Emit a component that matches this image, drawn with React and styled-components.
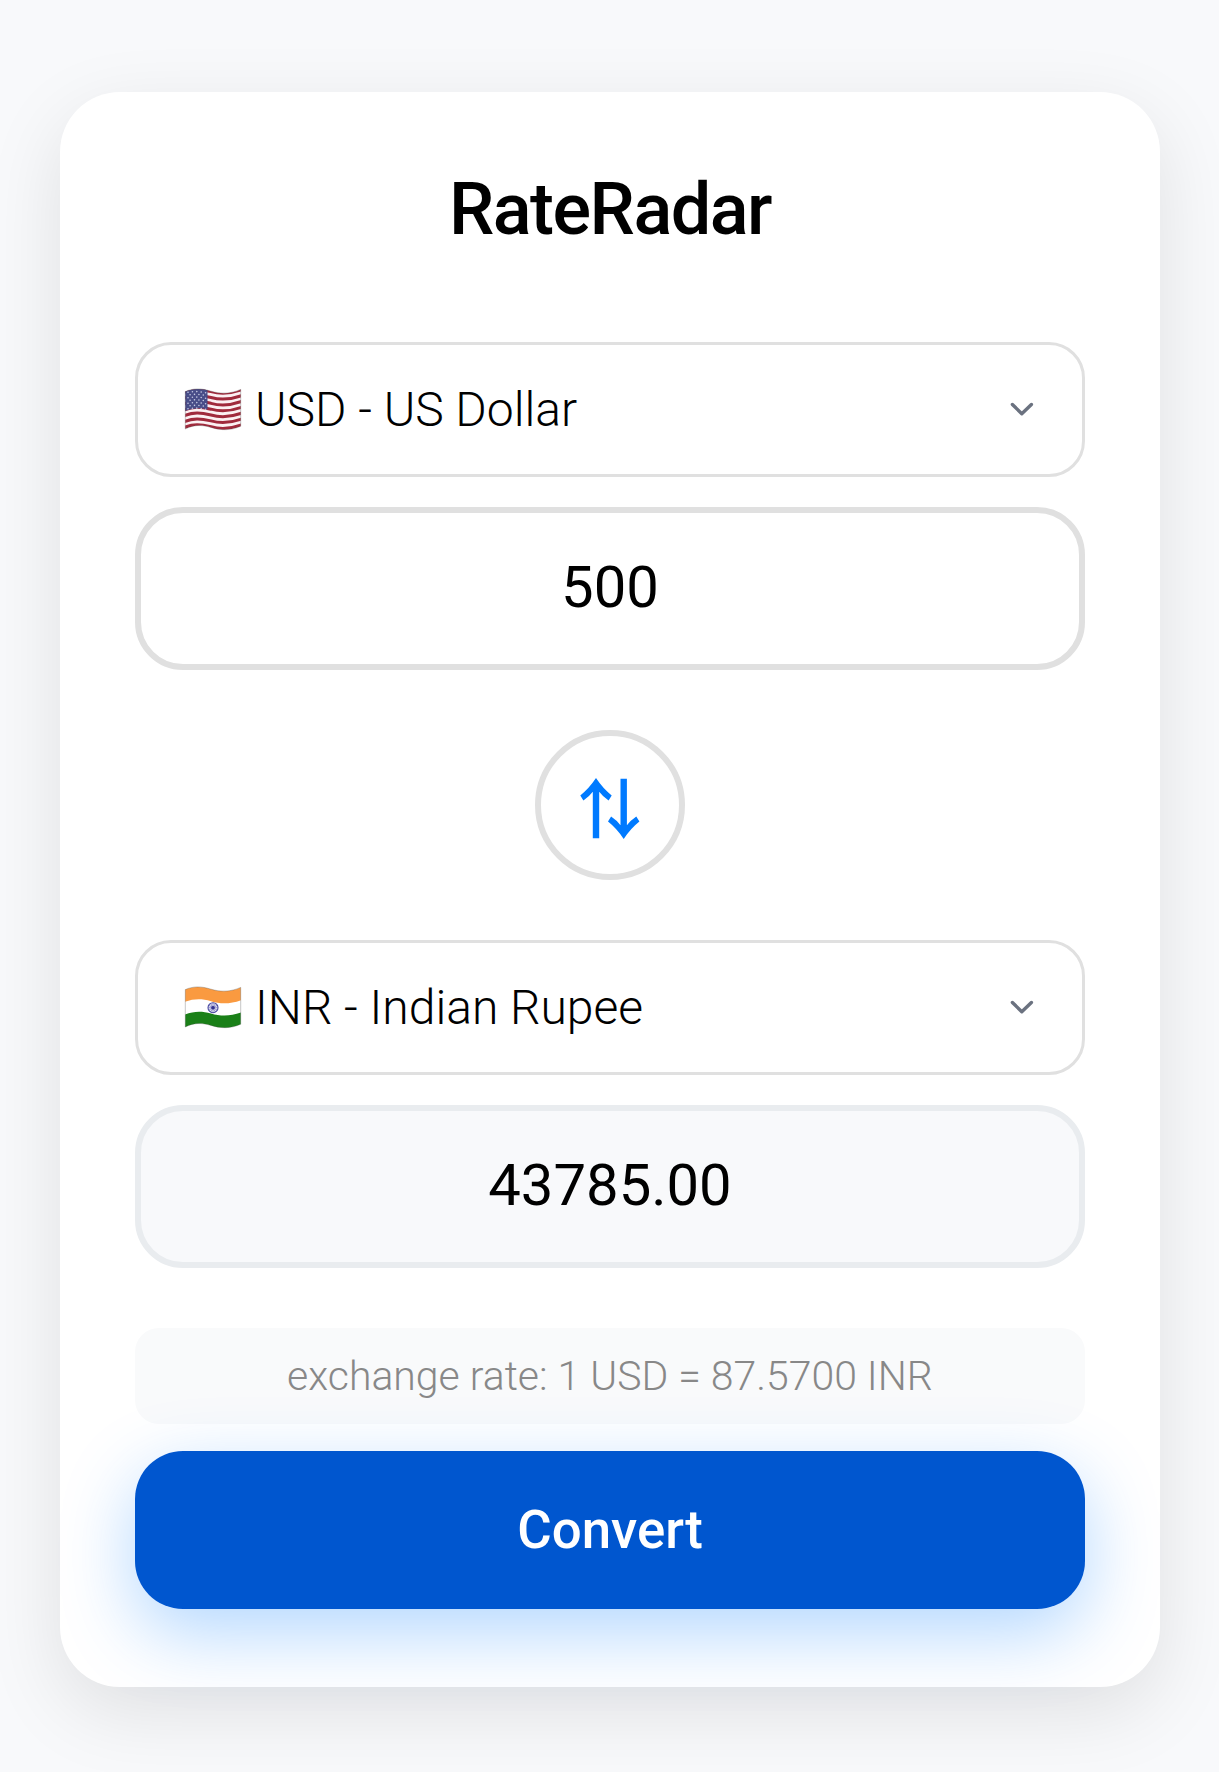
import React, { useState } from "react";
import styled, { createGlobalStyle } from "styled-components";

const GlobalStyle = createGlobalStyle`
  *, *::before, *::after { box-sizing: border-box; }
  body {
    margin: 0;
    background: #f8f9fb;
    font-family: Roboto, "Liberation Sans", sans-serif;
    color: #000;
  }
`;

const Page = styled.main`
  min-height: 1772px;
  padding: 92px 59px 85px 60px;
  overflow: hidden;
`;

const Card = styled.section`
  display: flex;
  flex-direction: column;
  height: 1595px;
  padding: 75px;
  border-radius: 60px;
  background: #fff;
  box-shadow: 0 24px 78px rgba(0, 0, 0, 0.1);
`;

const Title = styled.h1`
  margin: 0 0 90px;
  font-size: 72px;
  line-height: 85px;
  font-weight: 500;
  letter-spacing: -1.5px;
  text-align: center;
`;

const Field = styled.div`
  display: flex;
  flex-direction: column;
  gap: 30px;
`;

const Select = styled.button`
  display: flex;
  align-items: center;
  width: 100%;
  height: 135px;
  padding: 0 48px 0 45px;
  border: 3px solid #e0e0e0;
  border-radius: 36px;
  background: #fff;
  color: #000;
  font: 300 48px/56px Roboto, "Liberation Sans", sans-serif;
  text-align: left;
`;

const SelectLabel = styled.span`
  flex: 1;
  margin-left: 12px;
`;

const FlagIcon = styled.svg`
  width: 60px;
  height: 44px;
  margin-bottom: 1px;
`;

const ChevronIcon = styled.svg`
  width: 24px;
  height: 16px;
  margin-bottom: 2px;
`;

const Amount = styled.input`
  display: block;
  width: 100%;
  height: 163px;
  padding: 0 0 4px;
  border: 6px solid ${(p) => (p.readOnly ? "#e9ecef" : "#e0e0e0")};
  border-radius: 48px;
  background: ${(p) => (p.readOnly ? "#f8f9fb" : "#fff")};
  color: #000;
  font: 400 58px/68px Roboto, "Liberation Sans", sans-serif;
  text-align: center;
  outline: none;
`;

const SwapButton = styled.button`
  display: flex;
  align-items: center;
  justify-content: center;
  align-self: center;
  width: 150px;
  height: 150px;
  margin: 60px 0;
  padding: 6px 0 0;
  border: 6px solid #e0e0e0;
  border-radius: 50%;
  background: #fff;
  color: #007aff;
`;

const Rate = styled.p`
  margin: 60px 0 27px;
  padding: 24px 0;
  border-radius: 24px;
  background: #f9fafb;
  color: #888;
  font-size: 40.95px;
  line-height: 48px;
  font-weight: 300;
  text-align: center;
`;

const ConvertButton = styled.button`
  height: 158px;
  padding: 0 0 1px;
  border: 0;
  border-radius: 48px;
  background: #0056cf;
  box-shadow: 0 24px 75px rgba(0, 122, 255, 0.3);
  color: #fff;
  font: 500 52.8px/62px Roboto, "Liberation Sans", sans-serif;
`;

const FLAG_SHAPE =
  "M2.3 4.6 C10 1.2 18 1 28 4.2 C38 7.2 48 6.8 57.7 2.4 V39.2 C48 43.6 38 43.6 28 40.4 C18 37.4 10 38 2.3 42 Z";

const wave = (y) =>
  `M0 ${y + 3.6} C10 ${y - 0.8} 18 ${y} 28 ${y + 2.4} C38 ${y + 5.2} 48 ${y + 4.6} 60 ${y}`;

function UsFlag() {
  const stripes = [0, 1, 2, 3, 4, 5, 6];
  const stars = [];
  for (let r = 0; r < 7; r += 1) {
    for (let c = 0; c < 5; c += 1) {
      const x = 5 + c * 4.4 + (r % 2 ? 2.1 : 0);
      if (x < 24.5) stars.push([x, 6.2 + r * 2.75 - Math.sin((x / 24) * 3) * 1.6]);
    }
  }
  return (
    <FlagIcon viewBox="0 0 60 44" aria-hidden="true">
      <clipPath id="us-shape"><path d={FLAG_SHAPE} /></clipPath>
      <g clipPath="url(#us-shape)">
        <rect width="60" height="44" fill="#fbf0f2" />
        {stripes.map((i) => (
          <path key={i} d={wave(2.2 + i * 5.86)} fill="none" stroke="#a02a3c" strokeWidth="3" />
        ))}
        <path d="M0 0 H24.5 V22.4 C17 20.4 9 20.8 0 25 Z" fill="#484d88" />
        {stars.map(([x, y]) => (
          <circle key={`${x}-${y}`} cx={x} cy={y} r="0.8" fill="#c4c8e2" />
        ))}
      </g>
      <path d={FLAG_SHAPE} fill="none" stroke="#424242" strokeOpacity="0.3" strokeWidth="1" />
    </FlagIcon>
  );
}

function IndiaFlag() {
  const spokes = [0, 30, 60, 90, 120, 150];
  return (
    <FlagIcon viewBox="0 0 60 44" aria-hidden="true">
      <clipPath id="in-shape"><path d={FLAG_SHAPE} /></clipPath>
      <g clipPath="url(#in-shape)">
        <rect width="60" height="44" fill="#fff" />
        <path d="M0 0 H60 V14.4 C48 19.2 38 19.2 28 16.2 C18 13.4 10 13.6 0 17.6 Z" fill="#fa9a40" />
        <path d="M0 30.2 C10 26 18 25.8 28 28.4 C38 31.4 48 31.4 60 26.8 V44 H0 Z" fill="#1a8018" />
        <circle cx="30" cy="22.7" r="5" fill="#e4e4f4" stroke="#4747a0" strokeWidth="1.1" />
        {spokes.map((a) => (
          <path key={a} d="M30 18.1 V27.3" stroke="#5555a8" strokeWidth="0.5" transform={`rotate(${a} 30 22.7)`} />
        ))}
        <circle cx="30" cy="22.7" r="1.8" fill="#32328e" />
      </g>
      <path d={FLAG_SHAPE} fill="none" stroke="#424242" strokeOpacity="0.3" strokeWidth="1" />
    </FlagIcon>
  );
}

function Chevron() {
  return (
    <ChevronIcon viewBox="0 0 24 16" fill="none" aria-hidden="true">
      <path d="M2.4 3.5 L11.8 12.7 L21.4 3.5" stroke="#6b7280" strokeWidth="3.4" strokeLinecap="round" strokeLinejoin="round" />
    </ChevronIcon>
  );
}

const ARROW =
  "M16 0 Q23 10.5 31.7 17.4 L28.6 22.5 Q23 18.8 19.2 13.7 V60.2 H12.8 V13.7 Q9 18.8 3.4 22.5 L0.3 17.4 Q9 10.5 16 0 Z";

function SwapIcon() {
  return (
    <svg width="60" height="61" viewBox="0 0 60 61" fill="currentColor" aria-hidden="true">
      <path d={ARROW} />
      <path d={ARROW} transform="rotate(180 29.85 30.5)" />
    </svg>
  );
}

function CurrencySelect({ flag, children }) {
  return (
    <Select type="button">
      {flag}
      <SelectLabel>{children}</SelectLabel>
      <Chevron />
    </Select>
  );
}

export default function App() {
  const [amount, setAmount] = useState("500");
  return (
    <>
      <GlobalStyle />
      <Page>
        <Card>
          <Title>RateRadar</Title>
          <Field>
            <CurrencySelect flag={<UsFlag />}>USD - US Dollar</CurrencySelect>
            <Amount value={amount} onChange={(e) => setAmount(e.target.value)} aria-label="Amount" />
          </Field>
          <SwapButton type="button" aria-label="Swap currencies">
            <SwapIcon />
          </SwapButton>
          <Field>
            <CurrencySelect flag={<IndiaFlag />}>INR - Indian Rupee</CurrencySelect>
            <Amount value="43785.00" readOnly aria-label="Converted amount" />
          </Field>
          <Rate>exchange rate: 1 USD = 87.5700 INR</Rate>
          <ConvertButton type="button">Convert</ConvertButton>
        </Card>
      </Page>
    </>
  );
}
